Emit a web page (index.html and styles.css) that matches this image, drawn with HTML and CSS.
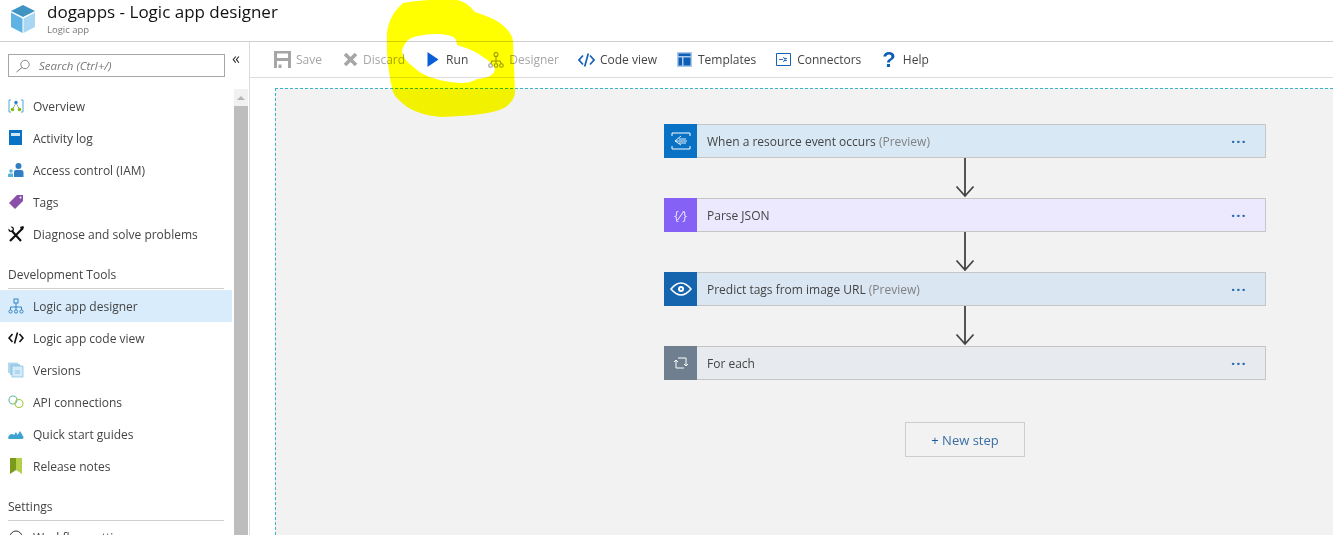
FILE: index.html
```html
<!DOCTYPE html>
<html lang="en">
<head>
<meta charset="utf-8">
<title>dogapps - Logic app designer</title>
<link rel="stylesheet" href="styles.css">
</head>
<body>
<header class="header">
  <svg class="logo" viewBox="0 0 26 30" width="26" height="30"><path d="M13 1 25 7 13 13 1 7Z" fill="#3f94c4"/><path d="M1 8.500 12.500 14.500V29L1 23Z" fill="#5eb3e4"/><path d="M25 8.500 13.500 14.500V29L25 23Z" fill="#a9d6f2"/></svg>
  <div class="head-text">
    <h1 class="title">dogapps - Logic app designer</h1>
    <div class="subtitle">Logic app</div>
  </div>
</header>
<div class="main">
  <aside class="side">
    <div class="search-row">
      <div class="search">
        <svg class="search-icon" viewBox="0 0 16 14" width="16" height="14"><circle cx="10" cy="5.500" r="4.200" fill="none" stroke="#777" stroke-width=".9"/><path d="M7 8.500 1.500 13" stroke="#777" stroke-width="1" fill="none"/></svg>
        <span>Search (Ctrl+/)</span>
      </div>
      <span class="collapse">«</span>
    </div>
    <div class="side-body">
      <nav class="nav">
        <a class="nav-item"><svg class="ni" viewBox="0 0 16 16"><path d="M3 2H1V14H3M13 2H15V14H13" fill="none" stroke="#4aa8d8" stroke-width="1"/><path d="M8 5 4.500 11M8 5 11.500 11" stroke="#7a9a9a" stroke-width=".8"/><circle cx="8" cy="4.500" r="1.700" fill="#2f7fc2"/><circle cx="4.500" cy="11.500" r="1.700" fill="#7fba00"/><circle cx="11.500" cy="11.500" r="1.700" fill="#7fba00"/></svg>Overview</a>
        <a class="nav-item"><svg class="ni" viewBox="0 0 16 16"><path d="M1 0H14V15H1Z" fill="#0a72c4"/><path d="M3 3H12V6H3Z" fill="#cfe6f7"/></svg>Activity log</a>
        <a class="nav-item"><svg class="ni" viewBox="0 0 16 16"><circle cx="10.500" cy="4" r="3" fill="#2f7fc2"/><path d="M6 15V10Q6 8 8 8H13Q15.500 8 15.500 10V15Z" fill="#2f7fc2"/><circle cx="3" cy="9" r="1.800" fill="#59b4d9"/><path d="M0 15V12.500Q0 11.500 1.500 11.500H5V15Z" fill="#59b4d9"/></svg>Access control (IAM)</a>
        <a class="nav-item"><svg class="ni" viewBox="0 0 16 16"><path d="M9 1H15V7L7 15 1 9Z" fill="#8a4fa8"/><circle cx="12.500" cy="3.500" r="1" fill="#fff"/></svg>Tags</a>
        <a class="nav-item"><svg class="ni" viewBox="0 0 16 16"><path d="M2 15 14 3M13 15 4 5" stroke="#111" stroke-width="2.200" fill="none"/><path d="M0.500 2.500 3 5 5 3 2.500 .5Q6 0 6 3.500L5 6 3 6Q0 6 .5 2.500Z" fill="#111"/><path d="M12 1 15 0 16 1 15 4 13 3.500Z" fill="#111"/></svg>Diagnose and solve problems</a>
        <div class="nav-head">Development Tools</div>
        <a class="nav-item active"><svg class="ni" viewBox="0 0 16 16" fill="none" stroke="#2f86c8" stroke-width="1"><rect x="6" y="1" width="4" height="4"/><path d="M8 5V9M2.500 12V9H13.500V12M8 9V12"/><circle cx="2.500" cy="13.500" r="1.600"/><circle cx="8" cy="13.500" r="1.600"/><circle cx="13.500" cy="13.500" r="1.600"/></svg>Logic app designer</a>
        <a class="nav-item"><svg class="ni" viewBox="0 0 16 16" fill="none" stroke="#111" stroke-width="1.600"><path d="M4.500 4 1 8 4.500 12M11.500 4 15 8 11.500 12M9.500 2.500 6.500 13.500"/></svg>Logic app code view</a>
        <a class="nav-item"><svg class="ni" viewBox="0 0 16 16"><path d="M0 .5H10V11H0Z" fill="#b3d9ef"/><path d="M2 2H12V13H2Z" fill="#9fcdea"/><path d="M4 4H15V15H4Z" fill="#d3eaf8" stroke="#8cc3e5" stroke-width=".8"/><path d="M7 9H12M7 11H12" stroke="#8cc3e5"/></svg>Versions</a>
        <a class="nav-item"><svg class="ni" viewBox="0 0 16 16" fill="none" stroke-width="1.100"><circle cx="5" cy="6" r="4" stroke="#62b8a5"/><circle cx="11" cy="9.500" r="4" stroke="#a5c83c"/></svg>API connections</a>
        <a class="nav-item"><svg class="ni" viewBox="0 0 16 16"><path d="M0 12Q1 8 4 8 5 8 6 9L8 6 9.500 9 12 5 15.500 11Q16 13 14 13H2Q0 13 0 12Z" fill="#3ea3d1"/></svg>Quick start guides</a>
        <a class="nav-item"><svg class="ni" viewBox="0 0 16 16"><path d="M2 0H8V12L2 16Z" fill="#7a9a1c"/><path d="M8 0H14V16L8 12Z" fill="#b4cf48"/></svg>Release notes</a>
        <div class="nav-head">Settings</div>
        <a class="nav-item"><svg class="ni" viewBox="0 0 16 16" fill="none" stroke="#333"><circle cx="8" cy="8" r="6"/></svg>Workflow settings</a>
      </nav>
      <div class="scrollbar">
        <div class="scroll-up"><span class="arrow"></span></div>
        <div class="scroll-thumb"></div>
      </div>
    </div>
  </aside>
  <section class="content">
    <div class="toolbar">
      <span class="tool off t-save"><svg class="ti" viewBox="0 0 17 17"><path d="M0 0H17V17H0Z" fill="#a6a6a6"/><path d="M3 2.500H14V7H3Z" fill="#fff"/><path d="M3 10H14V17H3Z" fill="#fff"/><path d="M4.500 13.500H7.500V17H4.500Z" fill="#a6a6a6"/></svg>Save</span>
      <span class="tool off t-discard"><svg class="ti" viewBox="0 0 15 15"><path d="M2 2 13 13M13 2 2 13" stroke="#a6a6a6" stroke-width="3.600"/></svg>Discard</span>
      <span class="tool t-run"><svg class="ti" viewBox="0 0 12 15"><path d="M0.500 0 11.500 7.500 .5 15Z" fill="#0b5fd6"/></svg>Run</span>
      <span class="tool off t-designer"><svg class="ti" viewBox="0 0 16 16" fill="none" stroke="#9a9a9a" stroke-width="1.100"><circle cx="8" cy="2.500" r="2"/><path d="M8 4.500V9M2.500 12 4 9H12L13.500 12M8 9V12"/><circle cx="2.500" cy="13.500" r="1.800"/><circle cx="8" cy="13.500" r="1.800"/><circle cx="13.500" cy="13.500" r="1.800"/></svg>Designer</span>
      <span class="tool t-code"><svg class="ti" viewBox="0 0 17 14" fill="none" stroke="#1760b8" stroke-width="1.700"><path d="M5 2.500 1 7 5 11.500M12 2.500 16 7 12 11.500M10.300 .5 6.700 13.500"/></svg>Code view</span>
      <span class="tool t-tpl"><svg class="ti" viewBox="0 0 15 15"><path d="M0 0H15V15H0Z" fill="#a9c8ea"/><path d="M1.500 1.500H13.500V4H1.500ZM1.500 5.500H5V13.500H1.500ZM6.500 5.500H13.500V13.500H6.500Z" fill="#0d5fb5"/></svg>Templates</span>
      <span class="tool t-conn"><svg class="ti" viewBox="0 0 15 14" fill="none" stroke="#1760b8" stroke-width="1"><path d="M.5.5H14.500V12.500H.5Z"/><path d="M3 6.500H7M7 4.500A2 2 0 1 1 7 8.500M8 5.500H11M8 7.500H11" stroke-width=".9"/></svg>Connectors</span>
      <span class="tool t-help"><span class="q">?</span>Help</span>
    </div>
    <div class="canvas-wrap">
      <div class="canvas">
        <div class="card c-blue"><span class="card-icon"><svg viewBox="0 0 20 18" width="20" height="18" fill="none" stroke="#fff" stroke-width="1"><path d="M1 4V1H19V4M1 14V17H19V14"/><path d="M4 9 10 4M4 9 10 13M4 9H16M8 7H15M8 11H15" stroke-width=".9"/></svg></span><span class="card-title">When a resource event occurs <em>(Preview)</em></span><span class="dots">···</span></div>
        <svg class="connector" viewBox="0 0 20 40" width="20" height="40"><path d="M10 0V38M1.500 28.500 10 38 18.500 28.500" fill="none" stroke="#444" stroke-width="1.800"/></svg>
        <div class="card c-purple"><span class="card-icon"><span class="json">{<i>⁄</i>}</span></span><span class="card-title">Parse JSON</span><span class="dots">···</span></div>
        <svg class="connector" viewBox="0 0 20 40" width="20" height="40"><path d="M10 0V38M1.500 28.500 10 38 18.500 28.500" fill="none" stroke="#444" stroke-width="1.800"/></svg>
        <div class="card c-eye"><span class="card-icon"><svg viewBox="0 0 22 14" width="22" height="14"><path d="M1 7Q6 1 11 1T21 7Q16 13 11 13T1 7Z" fill="none" stroke="#fff" stroke-width="1.600"/><circle cx="11" cy="7" r="3" fill="#fff"/><circle cx="11" cy="7" r="1" fill="#1565ae"/></svg></span><span class="card-title">Predict tags from image URL <em>(Preview)</em></span><span class="dots">···</span></div>
        <svg class="connector" viewBox="0 0 20 40" width="20" height="40"><path d="M10 0V38M1.500 28.500 10 38 18.500 28.500" fill="none" stroke="#444" stroke-width="1.800"/></svg>
        <div class="card c-grey"><span class="card-icon"><svg viewBox="0 0 16 12" width="16" height="12" fill="none" stroke="#fff" stroke-width="1"><path d="M3 3.500V11H11M13 8.500V1H5M1 5 3 3 5 5M11 7 13 9 15 7"/></svg></span><span class="card-title">For each</span><span class="dots">···</span></div>
        <button class="new-step"><span class="plus">+</span> New step</button>
      </div>
    </div>
  </section>
</div>
<svg class="scribble" viewBox="0 0 140 120" width="140" height="120"><path fill-rule="evenodd" fill="#ffff00" d="M16 3C30 0 55-1 70 0 80 2 84 8 88 12 100 16 110 20 114 24 122 30 126 36 126 42L128 92C128 100 120 108 112 110 100 114 80 116 55 117 40 116 28 112 20 107 12 100 6 96 5 88 1 70-1 50 0 33 1 22 6 12 16 3ZM15 50C17 44 20 40 24 38 35 34 50 33 60 35 66 36 70 38 70 45 80 48 90 52 96 57 104 62 108 67 108 70 106 76 100 78 90 79 85 82 80 83 72 83 60 82 52 80 46 78 38 76 32 72 24 65 18 60 15 55 15 50Z"/></svg>
</body>
</html>
```
FILE: styles.css
```css
* { box-sizing: border-box; }
html, body { height: 100%; }
body {
  margin: 0;
  height: 535px;
  overflow: hidden;
  background: #fff;
  color: #333;
  font-family: "Open Sans", "Noto Sans", "Liberation Sans", sans-serif;
  font-size: 12px;
  position: relative;
}
.header {
  height: 42px;
  display: flex;
  align-items: flex-start;
  padding: 4px 0 0 10px;
  border-bottom: 1px solid #cfcfcf;
}
.logo { flex: none; margin-right: 11px; }
.head-text { margin-top: -3px; }
.title { margin: 0; font-size: 17px; line-height: 22px; font-weight: 400; color: #111; white-space: nowrap; }
.subtitle { font-size: 9.500px; line-height: 12px; color: #777; margin-top: 1px; }
.main { display: flex; height: 493px; }
.side { width: 250px; flex: none; border-right: 1px solid #dcdcdc; display: flex; flex-direction: column; overflow: hidden; }
.search-row { height: 47px; display: flex; padding: 12px 0 0 8px; flex: none; }
.search {
  width: 217px; height: 23px;
  border: 1px solid #a6a6a6;
  display: flex; align-items: center;
  padding-left: 6px;
  color: #777;
  font-style: italic;
  font-size: 11.500px;
}
.search-icon { margin-right: 8px; }
.collapse { margin-left: 7px; font-size: 16px; line-height: 20px; margin-top: -6px; color: #333; }
.side-body { display: flex; flex: 1; min-height: 0; }
.nav { width: 232px; flex: none; padding-top: 1px; }
.nav-item {
  height: 32px;
  display: flex; align-items: center;
  padding-left: 8px;
  color: #444;
  white-space: nowrap;
}
.nav-item.active { background: #d9ecfb; margin-top: 1px; height: 32px; }
.ni { width: 16px; height: 16px; margin-right: 9px; flex: none; }
.nav-head {
  height: 39px;
  margin: 7px 8px 0;
  padding-top: 10px;
  height: 32px;
  line-height: 16px;
  color: #444;
  border-bottom: 1px solid #cfcfcf;
}
.scrollbar { width: 14px; margin-left: 2px; flex: none; display: flex; flex-direction: column; background: #f1f1f1; }
.scroll-up { height: 17px; flex: none; display: flex; justify-content: center; padding-top: 7px; }
.arrow { width: 0; height: 0; border: 4px solid transparent; border-top: 0; border-bottom: 4px solid #b5b5b5; }
.scroll-thumb { flex: 1; background: #bdbdbd; }
.content { flex: 1; min-width: 0; display: flex; flex-direction: column; }
.toolbar {
  height: 36px; flex: none;
  display: flex; align-items: center;
  padding-left: 24px;
  border-bottom: 1px solid #dcdcdc;
  white-space: nowrap;
  color: #444;
}
.tool { display: flex; align-items: center; }
.tool.off { color: #a6a6a6; }
.ti { flex: none; margin-right: 5px; }
.t-save .ti { width: 17px; height: 17px; }
.t-discard { margin-left: 21px; }
.t-discard .ti { width: 15px; height: 15px; }
.t-run { margin-left: 22px; }
.t-run .ti { width: 12px; height: 15px; margin-right: 7px; }
.t-designer { margin-left: 20px; }
.t-designer .ti { width: 16px; height: 16px; }
.t-code { margin-left: 19px; }
.t-code .ti { width: 17px; height: 14px; }
.t-tpl { margin-left: 20px; }
.t-tpl .ti { width: 15px; height: 15px; margin-right: 6px; }
.t-conn { margin-left: 20px; }
.t-conn .ti { width: 15px; height: 14px; margin-right: 6px; }
.t-help { margin-left: 21px; }
.q { color: #0d5fb5; font-weight: 700; font-size: 22px; line-height: 20px; margin-right: 7px; font-family: "Liberation Sans", sans-serif; }
.canvas-wrap { flex: 1; min-height: 0; padding: 10px 0 0 25px; overflow: hidden; }
.canvas {
  height: 100%;
  background: #f2f2f2;
  border-top: 1px dashed #3cb4c8;
  border-left: 1px dashed #3cb4c8;
  padding: 35px 0 0 388px;
  display: flex; flex-direction: column; align-items: flex-start;
}
.card {
  width: 602px; height: 34px; flex: none;
  display: flex; align-items: center;
  border: 1px solid #c6c6c6;
  border-left: 0;
  color: #444;
}
.card-icon { width: 33px; height: 34px; margin-top: -1px; margin-bottom: -1px; flex: none; display: flex; align-items: center; justify-content: center; color: #fff; }
.card-title { flex: 1; padding-left: 10px; white-space: nowrap; }
.card-title em { font-style: normal; color: #808080; }
.dots { width: 34px; text-align: left; color: #2a6bb5; font-size: 15px; font-weight: 700; letter-spacing: 1px; line-height: 12px; }
.c-blue { background: #d8e9f5; }
.c-blue .card-icon { background: #0a72c4; }
.c-purple { background: #ece8fd; }
.c-purple .card-icon { background: #8661f5; }
.c-eye { background: #dbe6f3; }
.c-eye .card-icon { background: #1565ae; }
.c-grey { background: #e7eaee; }
.c-grey .card-icon { background: #6f7f8f; }
.json { font-size: 13px; color: #e4dcff; }
.json i { font-size: 11px; color: #fff; padding: 0 1px; }
.connector { margin-left: 291px; flex: none; display: block; }
.new-step {
  width: 120px; height: 35px;
  margin: 42px 0 0 241px;
  border: 1px solid #cdcdcd;
  background: #f2f2f2;
  color: #3a6ea5;
  font: inherit;
  font-size: 13px;
  padding: 0;
}
.plus { color: #1d5a99; }
.scribble { position: absolute; left: 387px; top: 0; mix-blend-mode: multiply; pointer-events: none; }
```
